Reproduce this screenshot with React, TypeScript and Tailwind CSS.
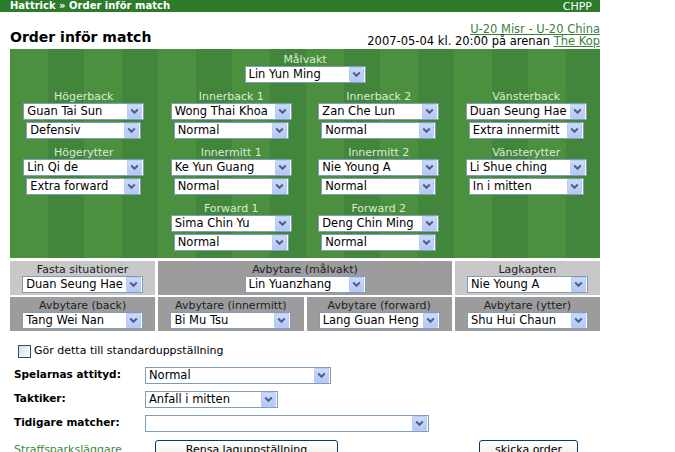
import React from "react";

const FONT = "font-['DejaVu_Sans',Verdana,sans-serif]";

function Arrow() {
  return (
    <span className="w-[15px] h-[15px] mr-[1px] shrink-0 bg-[linear-gradient(#cbdafc,#b4c8f6)] border border-[#b9cbf0] rounded-[1px] flex items-center justify-center">
      <svg width="9" height="7" viewBox="0 0 9 7">
        <polyline points="1.2,1.5 4.5,4.8 7.8,1.5" fill="none" stroke="#4d6185" strokeWidth="2" />
      </svg>
    </span>
  );
}

function Sel({ value, w = "w-[121px]" }: { value: string; w?: string }) {
  return (
    <div className={`${w} h-[17px] bg-white border border-[#7f9db9] flex items-center`}>
      <span className="flex-1 pl-[3px] text-[11.5px] leading-[15px] text-black whitespace-nowrap overflow-hidden">
        {value}
      </span>
      <Arrow />
    </div>
  );
}

function Pos({ label, player, order }: { label: string; player: string; order?: string }) {
  return (
    <div className="flex flex-col items-center">
      <div className="h-[13px] leading-[13px] text-[11px] text-[#dcebd4]">{label}</div>
      <Sel value={player} />
      {order && (
        <div className="mt-[2px]">
          <Sel value={order} w="w-[115px]" />
        </div>
      )}
    </div>
  );
}

function Cell({ label, player, light, span }: { label: string; player: string; light?: boolean; span?: boolean }) {
  return (
    <div
      className={`${light ? "bg-[#c8c8c8]" : "bg-[#9c9c9c]"} ${span ? "col-span-2" : ""} pt-[2px] pb-[2px] flex flex-col items-center`}
    >
      <div className="h-[13px] leading-[13px] text-[11px] text-[#222]">{label}</div>
      <Sel value={player} />
    </div>
  );
}

function Button({ label, w }: { label: string; w: string }) {
  return (
    <div
      className={`${w} h-[22px] rounded-[3px] border border-[#003c74] bg-[linear-gradient(#ffffff,#ece9e0)] flex items-center justify-center text-[11px] text-black`}
    >
      {label}
    </div>
  );
}

export default function App() {
  return (
    <div className={`${FONT} w-[675px] h-[452px] overflow-hidden bg-white text-black`}>
      <div className="w-[600px]">
        <div className="h-[12px] bg-[#2b7b2b] flex items-center justify-between pl-[10px] pr-[8px] text-[10px] leading-none text-white">
          <span className="font-bold">Hattrick » Order inför match</span>
          <span className="text-[11px]">CHPP</span>
        </div>

        <div className="pl-[10px] pt-[11px] flex justify-between items-end">
          <h1 className="text-[14px] font-bold leading-[18px] mb-[3px]">Order inför match</h1>
          <div className="text-[11.5px] leading-[12px] text-right pb-[2px]">
            <div>
              <span className="text-[#3d7d3d] underline">U-20 Misr - U-20 China</span>
            </div>
            <div>
              2007-05-04 kl. 20:00 på arenan <span className="text-[#3d7d3d] underline">The Kop</span>
            </div>
          </div>
        </div>

        <div className="ml-[10px] w-[590px] pt-[4px] pb-[7px] flex flex-col items-center bg-[#468b3c] bg-[repeating-linear-gradient(90deg,#4b903f_0px,#4b903f_38px,#41863a_38px,#41863a_74px)]">
          <Pos label="Målvakt" player="Lin Yun Ming" />
          <div className="w-full grid grid-cols-4 mt-[7px]">
            <Pos label="Högerback" player="Guan Tai Sun" order="Defensiv" />
            <Pos label="Innerback 1" player="Wong Thai Khoa" order="Normal" />
            <Pos label="Innerback 2" player="Zan Che Lun" order="Normal" />
            <Pos label="Vänsterback" player="Duan Seung Hae" order="Extra innermitt" />
          </div>
          <div className="w-full grid grid-cols-4 mt-[7px]">
            <Pos label="Högerytter" player="Lin Qi de" order="Extra forward" />
            <Pos label="Innermitt 1" player="Ke Yun Guang" order="Normal" />
            <Pos label="Innermitt 2" player="Nie Young A" order="Normal" />
            <Pos label="Vänsterytter" player="Li Shue ching" order="In i mitten" />
          </div>
          <div className="w-full grid grid-cols-4 mt-[7px]">
            <div />
            <Pos label="Forward 1" player="Sima Chin Yu" order="Normal" />
            <Pos label="Forward 2" player="Deng Chin Ming" order="Normal" />
            <div />
          </div>
        </div>

        <div className="ml-[10px] w-[590px] mt-[3px] grid grid-cols-4 gap-x-[3px] gap-y-[2px]">
          <Cell label="Fasta situationer" player="Duan Seung Hae" light />
          <Cell label="Avbytare (målvakt)" player="Lin Yuanzhang" span />
          <Cell label="Lagkapten" player="Nie Young A" light />
          <Cell label="Avbytare (back)" player="Tang Wei Nan" />
          <Cell label="Avbytare (innermitt)" player="Bi Mu Tsu" />
          <Cell label="Avbytare (forward)" player="Lang Guan Heng" />
          <Cell label="Avbytare (ytter)" player="Shu Hui Chaun" />
        </div>

        <div className="mt-[12px] pl-[18px] flex items-center gap-[3px] text-[11px]">
          <span className="w-[13px] h-[13px] border border-[#1c5180] bg-[linear-gradient(135deg,#dcdcd7,#ffffff)]" />
          <span>Gör detta till standarduppställning</span>
        </div>

        <div className="pl-[14px] mt-[7px] flex flex-col gap-[7px] text-[11px]">
          <div className="flex items-center">
            <span className="w-[131px] font-bold text-[10.5px]">Spelarnas attityd:</span>
            <Sel value="Normal" w="w-[186px]" />
          </div>
          <div className="flex items-center">
            <span className="w-[131px] font-bold text-[10.5px]">Taktiker:</span>
            <Sel value="Anfall i mitten" w="w-[133px]" />
          </div>
          <div className="flex items-center">
            <span className="w-[131px] font-bold text-[10.5px]">Tidigare matcher:</span>
            <Sel value="" w="w-[284px]" />
          </div>
          <div className="flex items-start mt-[1px]">
            <span className="w-[141px] pt-[2px] text-[#3a8a3a]">Straffsparksläggare</span>
            <Button label="Rensa laguppställning" w="w-[183px]" />
            <div className="ml-[141px]">
              <Button label="skicka order" w="w-[99px]" />
            </div>
          </div>
        </div>
      </div>
    </div>
  );
}
